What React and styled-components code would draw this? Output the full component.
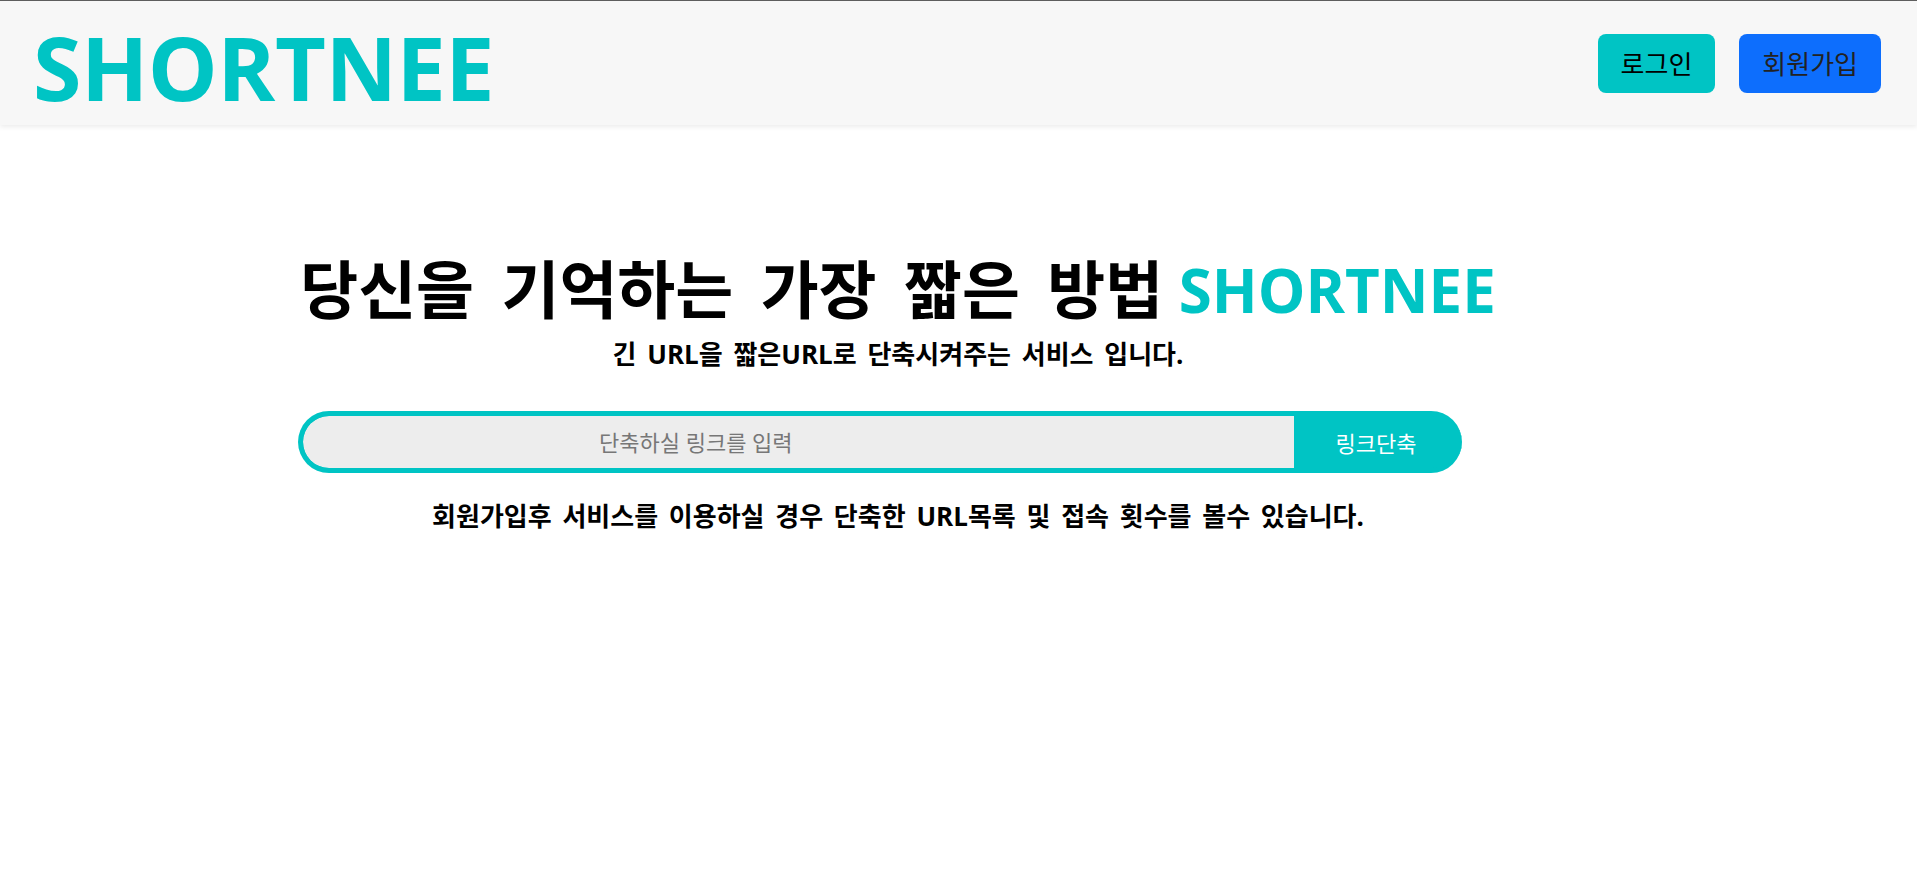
import React from 'react'
import styled, { createGlobalStyle } from 'styled-components'

const TEAL = '#00c4c4'
const FONT = `"Open Sans", "Noto Sans CJK KR", sans-serif`

const GlobalStyle = createGlobalStyle`
    html, body {
        margin: 0;
        padding: 0;
        background: #fff;
        font-family: ${FONT};
    }
    * {
        box-sizing: border-box;
    }
`

const Header = styled.header`
    height: 125px;
    border-top: 1px solid #5e5e5e;
    background-color: #f7f7f7;
    box-shadow: 0 2px 5px rgba(0, 0, 0, 0.08);
    display: flex;
    align-items: center;
    justify-content: space-between;
    padding: 0 36px 0 33px;
`

const Logo = styled.h1`
    margin: 8px 0 0;
    font-size: 88px;
    line-height: 1;
    font-weight: 700;
    color: ${TEAL};
    letter-spacing: -0.5px;
`

const Nav = styled.nav`
    display: flex;
    gap: 24px;
`

const NavButton = styled.button`
    height: 59px;
    padding: 0 23px;
    border: none;
    border-radius: 8px;
    font-family: ${FONT};
    font-size: 26px;
    background-color: ${props => props.$bg};
    color: ${props => props.$color};
    cursor: pointer;
`

const Main = styled.main`
    width: 1200px;
    margin-left: 298px;
    padding-top: 128px;
    display: flex;
    flex-direction: column;
    align-items: center;
`

const Title = styled.h2`
    margin: 0;
    font-size: 63px;
    line-height: 72px;
    font-weight: 700;
    color: #000;
    word-spacing: 11px;
    white-space: nowrap;
`

const Brand = styled.span`
    font-size: 60px;
    word-spacing: 0;
    color: ${TEAL};
`

const Sub = styled.p`
    margin: ${props => props.$mt} 0 0;
    font-size: 26px;
    line-height: 32px;
    font-weight: 700;
    word-spacing: 4px;
    white-space: nowrap;
    color: #000;
`

const Form = styled.form`
    align-self: flex-start;
    margin-top: 41px;
    width: 1164px;
    height: 62px;
    display: flex;
    border: 5px solid ${TEAL};
    border-right: none;
    border-radius: 31px;
    overflow: hidden;
    background-color: ${TEAL};
`

const UrlInput = styled.input`
    flex: 1;
    border: none;
    outline: none;
    border-radius: 26px 0 0 26px;
    background-color: #ededed;
    padding: 0 0 0 296px;
    font-family: ${FONT};
    font-size: 22px;
    color: #333;

    &::placeholder {
        color: #777;
    }
`

const ShortenButton = styled.button`
    width: 168px;
    border: none;
    background: transparent;
    color: #fff;
    font-family: ${FONT};
    font-size: 22px;
    padding: 0 4px 0 0;
    cursor: pointer;
`

export default function App() {
    return (
        <>
            <GlobalStyle />
            <Header>
                <Logo>SHORTNEE</Logo>
                <Nav>
                    <NavButton $bg={TEAL} $color="#000">로그인</NavButton>
                    <NavButton $bg="#0d6efd" $color="#222">회원가입</NavButton>
                </Nav>
            </Header>
            <Main>
                <Title>당신을 기억하는 가장 짧은 방법<Brand> SHORTNEE</Brand></Title>
                <Sub $mt="12px">긴 URL을 짧은URL로 단축시켜주는 서비스 입니다.</Sub>
                <Form onSubmit={e => e.preventDefault()}>
                    <UrlInput placeholder="단축하실 링크를 입력" />
                    <ShortenButton type="submit">링크단축</ShortenButton>
                </Form>
                <Sub $mt="27px">회원가입후 서비스를 이용하실 경우 단축한 URL목록 및 접속 횟수를 볼수 있습니다.</Sub>
            </Main>
        </>
    )
}
